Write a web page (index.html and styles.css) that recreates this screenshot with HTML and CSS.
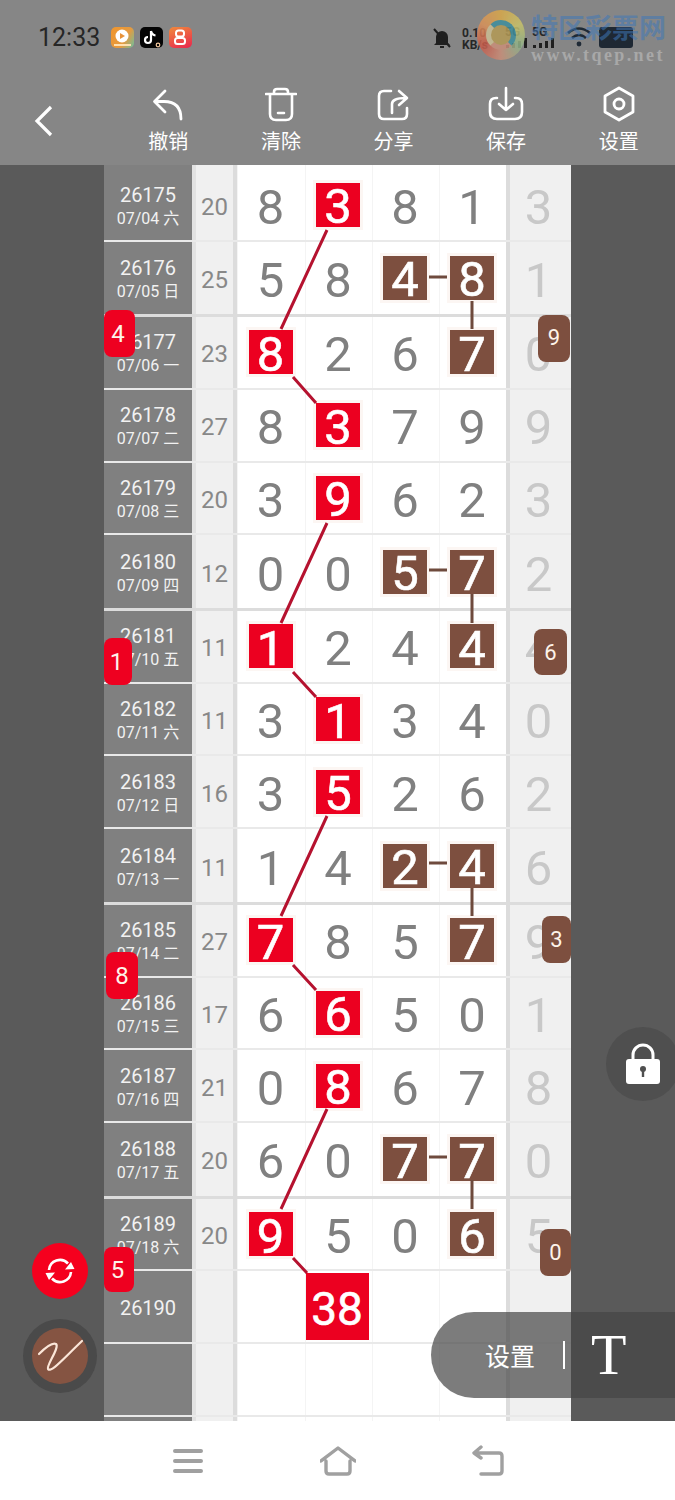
FILE: index.html
```html
<!DOCTYPE html>
<html lang="en">
<head>
    <meta charset="UTF-8">
    <meta name="viewport" content="width=device-width, initial-scale=1.0">
    <title>走势图</title>
    <link rel="stylesheet" href="styles.css">
</head>
<body>
    <header class="topbar">
        <div class="status">
            <span class="time">12:33</span>
            <div class="apps">
                <span class="app app-video">
                    <svg viewBox="0 0 23 21" width="23" height="21"><circle cx="11" cy="9" r="6.5" fill="#fff"/><path d="M9 6 L14 9 L9 12 Z" fill="#e8923a"/><rect x="3" y="17" width="17" height="2" fill="#ffe0b0"/></svg>
                </span>
                <span class="app app-tiktok">
                    <svg viewBox="0 0 22 21" width="22" height="21"><path d="M11 4 V13 A3 3 0 1 1 8 10 M11 4 Q12 8 15.500 8.500" fill="none" stroke="#fff" stroke-width="2.200"/><circle cx="18" cy="18" r="1.800" fill="none" stroke="#f4c9a0" stroke-width="1.200"/></svg>
                </span>
                <span class="app app-shop">
                    <svg viewBox="0 0 23 21" width="23" height="21"><rect x="7" y="3.500" width="8" height="6" rx="2.500" fill="none" stroke="#fff" stroke-width="2"/><rect x="6" y="11" width="10" height="6" rx="2.500" fill="none" stroke="#fff" stroke-width="2"/></svg>
                </span>
            </div>
            <div class="sys">
                <svg class="bell" viewBox="0 0 20 22" width="20" height="22"><path d="M4 16 V10 A6 6 0 0 1 16 10 V16 L18 18 H2 Z M8 19 H12 V21 H8 Z" fill="#1f1f1f"/><path d="M2 2 L18 20" stroke="#1f1f1f" stroke-width="2"/></svg>
                <span class="speed">0.10<br>KB/s</span>
                <span class="net net-one">
                    <span class="net-name">5G</span>
                    <svg viewBox="0 0 24 10" width="24" height="10"><path d="M1 7 H4 V10 H1 Z M7 5 H10 V10 H7 Z M13 3 H16 V10 H13 Z M19 0 H22 V10 H19 Z" fill="#1f1f1f"/></svg>
                </span>
                <span class="net">
                    <span class="net-name">5G</span>
                    <svg viewBox="0 0 24 10" width="24" height="10"><path d="M1 7 H4 V10 H1 Z M7 5 H10 V10 H7 Z M13 3 H16 V10 H13 Z M19 0 H22 V10 H19 Z" fill="#1f1f1f"/></svg>
                </span>
                <svg class="wifi" viewBox="0 0 24 20" width="24" height="20"><path d="M1 6 Q12 -3 23 6 M5 11 Q12 5 19 11" fill="none" stroke="#1f2a36" stroke-width="2.600"/><circle cx="12" cy="17" r="2.400" fill="#1f2a36"/></svg>
                <span class="battery"></span>
            </div>
        </div>
        <div class="watermark">
            <div class="wm-logo"><span class="wm-ring"></span></div>
            <div class="wm-text">
                <span class="wm-name">特区彩票网</span>
                <span class="wm-url">www.tqep.net</span>
            </div>
        </div>
        <nav class="toolbar">
            <a class="back">
                <svg viewBox="0 0 20 32" width="20" height="32"><path d="M17 2 L3 16 L17 30" fill="none" stroke="#fff" stroke-width="3.200"/></svg>
            </a>
            <a class="tool">
                <svg viewBox="0 0 32 36" width="32" height="36"><path d="M3 15.500 H12 Q29 15.500 29 33 M13 5 L2.500 15.500 L13 26" fill="none" stroke="#fff" stroke-width="2.800" stroke-linecap="round" stroke-linejoin="round"/></svg>
                <span>撤销</span>
            </a>
            <a class="tool">
                <svg viewBox="0 0 32 36" width="32" height="36"><path d="M1 8 H31 M9 8 V6 Q9 3 12 3 H20 Q23 3 23 6 V8 M5 8 V28 Q5 34 11 34 H21 Q27 34 27 28 V8 M13 27 H19" fill="none" stroke="#fff" stroke-width="2.600" stroke-linecap="round"/></svg>
                <span>清除</span>
            </a>
            <a class="tool">
                <svg viewBox="0 0 32 36" width="32" height="36"><path d="M14 5 H7 Q2 5 2 10 V28 Q2 33 7 33 H25 Q30 33 30 28 V22 M15 27 V18 Q15 12 29 12 M22 5 L30 12 L22 19" fill="none" stroke="#fff" stroke-width="2.600" stroke-linecap="round" stroke-linejoin="round"/></svg>
                <span>分享</span>
            </a>
            <a class="tool">
                <svg viewBox="0 0 36 36" width="36" height="36"><path d="M9 12 H8 Q2 12 2 18 V26 Q2 33 9 33 H27 Q34 33 34 26 V18 Q34 12 28 12 H27 M18 2 V24 M11 18 L18 24 L25 18" fill="none" stroke="#fff" stroke-width="2.600" stroke-linecap="round" stroke-linejoin="round"/></svg>
                <span>保存</span>
            </a>
            <a class="tool">
                <svg viewBox="0 0 34 36" width="34" height="36"><path d="M17 2 L31 10 V26 L17 34 L3 26 V10 Z" fill="none" stroke="#fff" stroke-width="2.800" stroke-linejoin="round"/><circle cx="17" cy="18" r="5" fill="none" stroke="#fff" stroke-width="2.800"/></svg>
                <span>设置</span>
            </a>
        </nav>
    </header>

    <main class="main">
        <section class="sheet">
            <div class="row row-stub"><div class="date"></div><div class="sum"></div><div class="cell"></div><div class="cell"></div><div class="cell"></div><div class="cell"></div><div class="last"></div></div>

            <div class="row row-first"><div class="date"><b>26175</b><span>07/04 六</span></div><div class="sum">20</div><div class="cell">8</div><div class="cell"><i class="box red">3</i></div><div class="cell">8</div><div class="cell">1</div><div class="last">3</div></div>
            <div class="row row-end"><div class="date"><b>26176</b><span>07/05 日</span></div><div class="sum">25</div><div class="cell">5</div><div class="cell">8</div><div class="cell"><i class="box brown">4</i></div><div class="cell"><i class="box brown">8</i></div><div class="last">1</div></div>

            <div class="row"><div class="date"><b>26177</b><span>07/06 一</span></div><div class="sum">23</div><div class="cell"><i class="box red">8</i></div><div class="cell">2</div><div class="cell">6</div><div class="cell"><i class="box brown">7</i></div><div class="last">0</div></div>
            <div class="row"><div class="date"><b>26178</b><span>07/07 二</span></div><div class="sum">27</div><div class="cell">8</div><div class="cell"><i class="box red">3</i></div><div class="cell">7</div><div class="cell">9</div><div class="last">9</div></div>
            <div class="row"><div class="date"><b>26179</b><span>07/08 三</span></div><div class="sum">20</div><div class="cell">3</div><div class="cell"><i class="box red">9</i></div><div class="cell">6</div><div class="cell">2</div><div class="last">3</div></div>
            <div class="row row-end"><div class="date"><b>26180</b><span>07/09 四</span></div><div class="sum">12</div><div class="cell">0</div><div class="cell">0</div><div class="cell"><i class="box brown">5</i></div><div class="cell"><i class="box brown">7</i></div><div class="last">2</div></div>

            <div class="row"><div class="date"><b>26181</b><span>07/10 五</span></div><div class="sum">11</div><div class="cell"><i class="box red">1</i></div><div class="cell">2</div><div class="cell">4</div><div class="cell"><i class="box brown">4</i></div><div class="last">4</div></div>
            <div class="row"><div class="date"><b>26182</b><span>07/11 六</span></div><div class="sum">11</div><div class="cell">3</div><div class="cell"><i class="box red">1</i></div><div class="cell">3</div><div class="cell">4</div><div class="last">0</div></div>
            <div class="row"><div class="date"><b>26183</b><span>07/12 日</span></div><div class="sum">16</div><div class="cell">3</div><div class="cell"><i class="box red">5</i></div><div class="cell">2</div><div class="cell">6</div><div class="last">2</div></div>
            <div class="row row-end"><div class="date"><b>26184</b><span>07/13 一</span></div><div class="sum">11</div><div class="cell">1</div><div class="cell">4</div><div class="cell"><i class="box brown">2</i></div><div class="cell"><i class="box brown">4</i></div><div class="last">6</div></div>

            <div class="row"><div class="date"><b>26185</b><span>07/14 二</span></div><div class="sum">27</div><div class="cell"><i class="box red">7</i></div><div class="cell">8</div><div class="cell">5</div><div class="cell"><i class="box brown">7</i></div><div class="last">9</div></div>
            <div class="row"><div class="date"><b>26186</b><span>07/15 三</span></div><div class="sum">17</div><div class="cell">6</div><div class="cell"><i class="box red">6</i></div><div class="cell">5</div><div class="cell">0</div><div class="last">1</div></div>
            <div class="row"><div class="date"><b>26187</b><span>07/16 四</span></div><div class="sum">21</div><div class="cell">0</div><div class="cell"><i class="box red">8</i></div><div class="cell">6</div><div class="cell">7</div><div class="last">8</div></div>
            <div class="row row-end"><div class="date"><b>26188</b><span>07/17 五</span></div><div class="sum">20</div><div class="cell">6</div><div class="cell">0</div><div class="cell"><i class="box brown">7</i></div><div class="cell"><i class="box brown">7</i></div><div class="last">0</div></div>

            <div class="row"><div class="date"><b>26189</b><span>07/18 六</span></div><div class="sum">20</div><div class="cell"><i class="box red">9</i></div><div class="cell">5</div><div class="cell">0</div><div class="cell"><i class="box brown">6</i></div><div class="last">5</div></div>
            <div class="row"><div class="date"><b>26190</b></div><div class="sum"></div><div class="cell"></div><div class="cell"><i class="box red box-total">38</i></div><div class="cell"></div><div class="cell"></div><div class="last"></div></div>
            <div class="row"><div class="date"></div><div class="sum"></div><div class="cell"></div><div class="cell"></div><div class="cell"></div><div class="cell"></div><div class="last"></div></div>
            <div class="row"><div class="date"></div><div class="sum"></div><div class="cell"></div><div class="cell"></div><div class="cell"></div><div class="cell"></div><div class="last"></div></div>
        </section>

        <!-- connector lines, in page coordinates -->
        <svg class="links" viewBox="0 165 675 1256" width="675" height="1256">
            <g class="link-red">
                <path d="M327 230 L281 329 M293 377 L316 403"/>
                <path d="M327 523 L281 623 M293 672 L316 697"/>
                <path d="M327 816 L281 916 M293 965 L316 990"/>
                <path d="M327 1109 L281 1209 M293 1258 L307 1273"/>
            </g>
            <g class="link-brown">
                <path d="M429 277 H447 M472 301 V329"/>
                <path d="M429 570 H447 M472 594 V623"/>
                <path d="M429 863 H447 M472 888 V916"/>
                <path d="M429 1157 H447 M472 1180 V1209"/>
            </g>
        </svg>

        <span class="badge badge-red b-four">4</span>
        <span class="badge badge-red b-one">1</span>
        <span class="badge badge-red b-eight">8</span>
        <span class="badge badge-red b-five">5</span>
        <span class="badge badge-brown b-nine">9</span>
        <span class="badge badge-brown b-six">6</span>
        <span class="badge badge-brown b-three">3</span>
        <span class="badge badge-brown b-zero">0</span>

        <button class="fab fab-lock">
            <svg viewBox="0 0 36 42" width="36" height="42"><path d="M8 18 V12 A10 10 0 0 1 28 12 V18" fill="none" stroke="#fff" stroke-width="3"/><rect x="1" y="16" width="34" height="25" rx="3" fill="#fff"/><circle cx="18" cy="26" r="3" fill="#4f4f4f"/><rect x="16.800" y="27" width="2.400" height="7" fill="#4f4f4f"/></svg>
        </button>
        <button class="fab fab-sync">
            <svg viewBox="-15 -14 30 28" width="30" height="28"><path d="M-11 -1 A11 11 0 0 1 8 -7.500 M11 1 A11 11 0 0 1 -8 7.500" fill="none" stroke="#fff" stroke-width="2.600"/><path d="M14.500 -2 L5 -1.500 L11 -9 Z M-14.500 2 L-5 1.500 L-11 9 Z" fill="#fff"/></svg>
        </button>
        <button class="fab fab-pen">
            <svg viewBox="0 0 56 56" width="56" height="56"><path d="M7 26 C13 20 20 14 24 16 C28 19 14 38 16 41 C19 45 30 32 50 13" fill="none" stroke="#fbe6d8" stroke-width="2.200" stroke-linecap="round"/></svg>
        </button>

        <div class="pill">
            <span class="pill-label">设置</span>
            <span class="pill-line"></span>
            <span class="pill-font">T</span>
        </div>
    </main>

    <footer class="navbar">
        <svg viewBox="0 0 36 32" width="36" height="32"><path d="M5 6 H31 M5 16 H31 M5 26 H31" stroke="#a0a0a0" stroke-width="4" stroke-linecap="round"/></svg>
        <svg viewBox="0 0 36 32" width="36" height="32"><path d="M1 16 L18 3 L35 16 M6 16 V26 Q6 29 9 29 H27 Q30 29 30 26 V16" fill="none" stroke="#a0a0a0" stroke-width="3.400" stroke-linecap="round" stroke-linejoin="round"/></svg>
        <svg viewBox="0 0 36 32" width="36" height="32"><path d="M4 8 H29 Q32 8 32 11 V26 Q32 29 29 29 H11 M11 2 L4 8 L11 13" fill="none" stroke="#a0a0a0" stroke-width="3.400" stroke-linecap="round" stroke-linejoin="round"/></svg>
    </footer>
</body>
</html>
```

FILE: styles.css
```css
* {
    box-sizing: border-box;
}
body {
    margin: 0;
    width: 675px;
    height: 1500px;
    overflow: hidden;
    display: flex;
    flex-direction: column;
    font-family: Roboto, "Noto Sans CJK SC", sans-serif;
    background-color: #fff;
}

/* top bar */
.topbar {
    position: relative;
    height: 165px;
    flex: none;
    background-color: #868686;
}
.status {
    height: 76px;
    padding: 27px 0 0 38px;
    display: flex;
    align-items: flex-start;
}
.time {
    font-size: 25px;
    line-height: 21px;
    color: #262626;
}
.apps {
    display: flex;
    gap: 6px;
    margin-left: 11px;
}
.app {
    width: 23px;
    height: 21px;
    border-radius: 5px;
    display: block;
}
.app svg {
    display: block;
}
.app-video {
    background: linear-gradient(120deg, #f0962e, #e59a40 60%, #6cc0a0);
}
.app-tiktok {
    background-color: #050505;
}
.app-shop {
    background: linear-gradient(160deg, #f08a3c, #e8254e);
}
.sys {
    position: absolute;
    left: 432px;
    top: 27px;
    display: flex;
    align-items: flex-start;
}
.bell {
    margin-right: 10px;
}
.speed {
    width: 40px;
    font-size: 12px;
    line-height: 12px;
    font-weight: 700;
    color: #262626;
}
.net {
    width: 25px;
    display: flex;
    flex-direction: column;
    font-size: 12px;
    line-height: 11px;
    font-weight: 700;
    color: #262626;
}
.net-one {
    margin-right: 2px;
    margin-left: 3px;
}
.wifi {
    margin-left: 10px;
}
.battery {
    width: 34px;
    height: 21px;
    margin-left: 8px;
    border-radius: 3px;
    background-color: #1e2833;
}

/* site stamp over the status bar */
.watermark {
    position: absolute;
    left: 477px;
    top: 10px;
    display: flex;
    gap: 6px;
}
.wm-logo {
    width: 48px;
    height: 50px;
    border-radius: 50%;
    background: conic-gradient(#d9a94a, #c9c26a, #8fb28a, #c98f7a, #c65a4a, #d9925a, #d9a94a);
    display: flex;
    align-items: center;
    justify-content: center;
    opacity: 0.85;
}
.wm-ring {
    width: 30px;
    height: 30px;
    border-radius: 50%;
    border: 5px solid #3f8f9e;
    border-left-color: #cbbf95;
    border-bottom-color: #c98f7a;
    background-color: #b49a55;
}
.wm-text {
    display: flex;
    flex-direction: column;
}
.wm-name {
    font-size: 27px;
    line-height: 36px;
    margin-top: 1px;
    font-weight: 700;
    color: rgba(62, 120, 185, 0.55);
    white-space: nowrap;
}
.wm-url {
    font-family: "Liberation Serif", serif;
    font-size: 18px;
    line-height: 16px;
    letter-spacing: 2.400px;
    font-weight: 700;
    color: #a8a8a8;
    white-space: nowrap;
}
.toolbar {
    display: flex;
    height: 89px;
    padding-top: 10px;
}
.back {
    width: 112px;
    padding: 19px 0 0 34px;
}
.tool {
    flex: 1;
    display: flex;
    flex-direction: column;
    align-items: center;
    color: #fff;
    font-size: 20px;
    line-height: 20px;
}
.tool span {
    margin-top: 10px;
}

/* number table */
.main {
    position: relative;
    height: 1256px;
    flex: none;
    overflow: hidden;
    background-color: #5a5a5a;
}
.sheet {
    width: 467px;
    height: 100%;
    margin-left: 104px;
    overflow: hidden;
}
.row {
    height: 72.800px;
    display: grid;
    grid-template-columns: 88px 45px 68px 67px 67px 67px 65px;
    border-bottom: 2px solid #e9e9e9;
}
.row-stub {
    height: 5px;
}
.row-first {
    height: 71.500px;
}
.row-end {
    height: 75.500px;
    border-bottom: 3.500px solid #dcdcdc;
}
.date {
    display: flex;
    flex-direction: column;
    align-items: center;
    justify-content: center;
    padding-top: 3px;
    background-color: #808080;
    color: #f2f2f2;
}
.date b {
    font-size: 20px;
    line-height: 24px;
    font-weight: 400;
}
.date span {
    font-size: 16px;
    line-height: 23px;
}
.sum,
.cell,
.last {
    display: flex;
    align-items: center;
    justify-content: center;
    min-height: 0;
    overflow: visible;
}
.sum {
    padding-top: 4px;
    border-left: 4px solid #e2e2e2;
    border-right: 4px solid #dcdcdc;
    background-color: #f0f0f0;
    font-size: 24px;
    color: #888;
}
.cell {
    padding: 5px 2px 0 0;
    background-color: #fff;
    border-left: 1px solid #f4f4f4;
    font-size: 49px;
    color: #808080;
}
.last {
    padding: 5px 4px 0 0;
    border-left: 4px solid #dcdcdc;
    background-color: #f0f0f0;
    font-size: 49px;
    color: #c8c8c8;
}
.box {
    width: 44px;
    height: 44px;
    margin-bottom: 5px;
    padding-top: 4px;
    display: flex;
    align-items: center;
    justify-content: center;
    flex: none;
    font-style: normal;
    font-weight: 400;
    color: #fff;
    -webkit-text-stroke: 0.6px #fff;
    box-shadow: 0 0 0 3px rgba(250, 238, 232, 0.5);
}
.red {
    background-color: #ec0020;
}
.brown {
    background-color: #7d4f3f;
}
.box-total {
    width: 63px;
    height: 67px;
    margin-right: 2px;
    font-size: 46px;
    box-shadow: none;
}

/* lines between marked numbers */
.links {
    position: absolute;
    left: 0;
    top: 0;
    fill: none;
}
.link-red {
    stroke: #b5122f;
    stroke-width: 3;
}
.link-brown {
    stroke: #6e4a3d;
    stroke-width: 3;
}

/* side counters */
.badge {
    position: absolute;
    display: flex;
    align-items: center;
    justify-content: center;
    border-radius: 8px;
    color: #fdf3ea;
    font-size: 24px;
}
.badge-red {
    width: 31px;
    height: 47px;
    padding-right: 3px;
    background-color: #ee0020;
}
.badge-brown {
    width: 32px;
    height: 47px;
    background-color: #7d4f3f;
    font-size: 22px;
}
.b-four {
    left: 104px;
    top: 145px;
}
.b-one {
    left: 104px;
    top: 473px;
    width: 28px;
}
.b-eight {
    left: 106px;
    top: 787px;
    width: 32px;
    padding-right: 0;
}
.b-five {
    left: 104px;
    top: 1082px;
    width: 30px;
    height: 45px;
}
.b-nine {
    left: 538px;
    top: 150px;
    padding-bottom: 3px;
}
.b-six {
    left: 534px;
    top: 464px;
    width: 33px;
    height: 46px;
}
.b-three {
    left: 542px;
    top: 751px;
    width: 29px;
}
.b-zero {
    left: 540px;
    top: 1064px;
    width: 31px;
}

/* floating buttons */
.fab {
    position: absolute;
    padding: 0;
    border: none;
    border-radius: 50%;
    display: flex;
    align-items: center;
    justify-content: center;
}
.fab-lock {
    left: 606px;
    top: 862px;
    width: 74px;
    height: 74px;
    background-color: #4f4f4f;
}
.fab-sync {
    left: 32px;
    top: 1078px;
    width: 56px;
    height: 56px;
    background-color: #f5001e;
}
.fab-pen {
    left: 32px;
    top: 1163px;
    width: 56px;
    height: 56px;
    background-color: #855442;
    box-shadow: 0 0 0 9px #4a4a4a;
}
.pill {
    position: absolute;
    left: 431px;
    top: 1147px;
    right: 0;
    height: 86px;
    border-radius: 43px 0 0 43px;
    background-color: rgba(69, 69, 69, 0.7);
    display: flex;
    align-items: center;
    color: #fff;
}
.pill-label {
    margin-left: 54px;
    font-size: 25px;
}
.pill-line {
    width: 2px;
    height: 28px;
    margin-left: 28px;
    background-color: #fff;
}
.pill-font {
    margin-left: 26px;
    font-family: "Liberation Serif", serif;
    font-size: 58px;
    line-height: 58px;
}

/* phone navigation */
.navbar {
    flex: 1;
    display: flex;
    align-items: center;
    justify-content: center;
    gap: 114px;
    background-color: #fff;
}
```
